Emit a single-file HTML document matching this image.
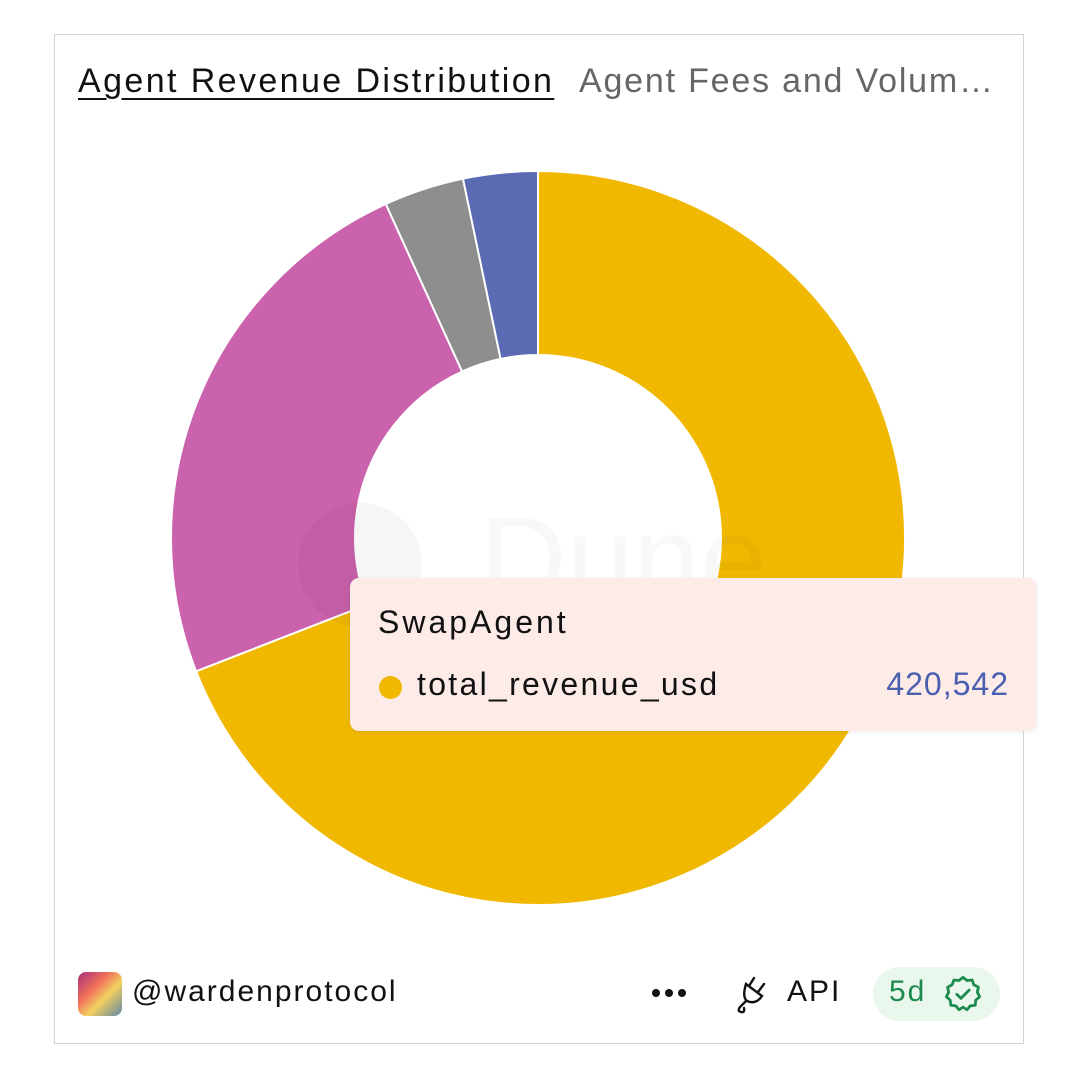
<!DOCTYPE html>
<html><head><meta charset="utf-8"><style>
body{margin:0;width:1078px;height:1070px;background:#fff;font-family:"Liberation Sans",sans-serif;position:relative;overflow:hidden}
.card{position:absolute;left:54px;top:34px;width:970px;height:1010px;border:1.5px solid #d4d4d4;box-sizing:border-box}
.t{position:absolute;top:62px;font-size:34px;white-space:nowrap;letter-spacing:2.4px}
.tip{position:absolute;left:350px;top:578px;width:687px;height:153px;background:#fdebe7;border-radius:9px;box-shadow:0 1px 4px rgba(0,0,0,.08)}
.f{position:absolute;font-size:30px;color:#111;top:975px;letter-spacing:2px}
</style></head><body>
<div class="card"></div>
<div class="t" style="left:78px;color:#111;text-decoration:underline;text-underline-offset:6px;text-decoration-thickness:2px">Agent Revenue Distribution</div>
<div class="t" style="left:579px;width:417px;overflow:hidden;text-overflow:ellipsis;color:#666;letter-spacing:1.8px">Agent Fees and Volume Over Time</div>
<svg style="position:absolute;left:0;top:0" width="1078" height="1070">
<path d="M538,171 A367,367 0 1 1 196.1,671.3 L367.5,604.5 A183,183 0 1 0 538,355 Z" fill="#f0b800" stroke="#fff" stroke-width="2"/>
<path d="M196.1,671.3 A367,367 0 0 1 385.8,204 L462.1,371.5 A183,183 0 0 0 367.5,604.5 Z" fill="#cb62ad" stroke="#fff" stroke-width="2"/>
<path d="M385.8,204 A367,367 0 0 1 463,178.7 L500.6,358.9 A183,183 0 0 0 462.1,371.5 Z" fill="#8e8e8e" stroke="#fff" stroke-width="2"/>
<path d="M463,178.7 A367,367 0 0 1 538,171 L538,355 A183,183 0 0 0 500.6,358.9 Z" fill="#5a6ab3" stroke="#fff" stroke-width="2"/>
<circle cx="360" cy="565" r="62" fill="#000" opacity="0.035"/>
<text x="480" y="600" font-family="Liberation Sans" font-size="120" fill="#000" opacity="0.025">Dune</text>
</svg>
<div class="tip">
<div style="position:absolute;left:28px;top:26px;font-size:32px;color:#111;letter-spacing:3px">SwapAgent</div>
<div style="position:absolute;left:29px;top:98px;width:23px;height:23px;border-radius:50%;background:#f0b800"></div>
<div style="position:absolute;left:67px;top:88px;font-size:32px;color:#111;letter-spacing:2.3px">total_revenue_usd</div>
<div style="position:absolute;right:28px;top:88px;font-size:32px;color:#4a5fb0;letter-spacing:1px">420,542</div>
</div>
<div style="position:absolute;left:78px;top:972px;width:44px;height:44px;border-radius:8px;background:linear-gradient(135deg,#a5307d,#ef6d5a 35%,#f3d060 60%,#5f86a8)"></div>
<div class="f" style="left:132px">@wardenprotocol</div>
<svg style="position:absolute;left:650px;top:986px" width="40" height="14"><circle cx="6" cy="7" r="4" fill="#111"/><circle cx="19" cy="7" r="4" fill="#111"/><circle cx="32" cy="7" r="4" fill="#111"/></svg>
<svg style="position:absolute;left:734px;top:975px" width="36" height="40" viewBox="0 0 36 40" fill="none" stroke="#111" stroke-width="2.4" stroke-linecap="round"><path d="M20 3 L15 11 M30 9 L24 17 M12 9 L28 21 Q22 30 13 26 Q8 22 12 9 Z M12 26 L6 32 Q3 36 7 37 Q11 38 10 33"/></svg>
<div class="f" style="left:787px">API</div>
<div style="position:absolute;left:873px;top:967px;width:127px;height:54px;border-radius:27px;background:#eaf7ec"></div>
<div class="f" style="left:889px;color:#1d8a4e">5d</div>
<svg style="position:absolute;left:942px;top:973px" width="42" height="42" viewBox="0 0 24 24" fill="none" stroke="#1d8a4e" stroke-width="1.6" stroke-linejoin="round" stroke-linecap="round"><path d="M12 2.5l2.3 1.8 2.9-.3 1 2.7 2.6 1.4-.6 2.9 1.3 2.6-2.2 1.9-.3 2.9-2.9.4L14.3 21 12 19.5 9.7 21l-1.8-2.2-2.9-.4-.3-2.9L2.5 13.6l1.3-2.6-.6-2.9 2.6-1.4 1-2.7 2.9.3z"/><path d="M8.5 12.2l2.3 2.3 4.7-4.7"/></svg>
</body></html>
